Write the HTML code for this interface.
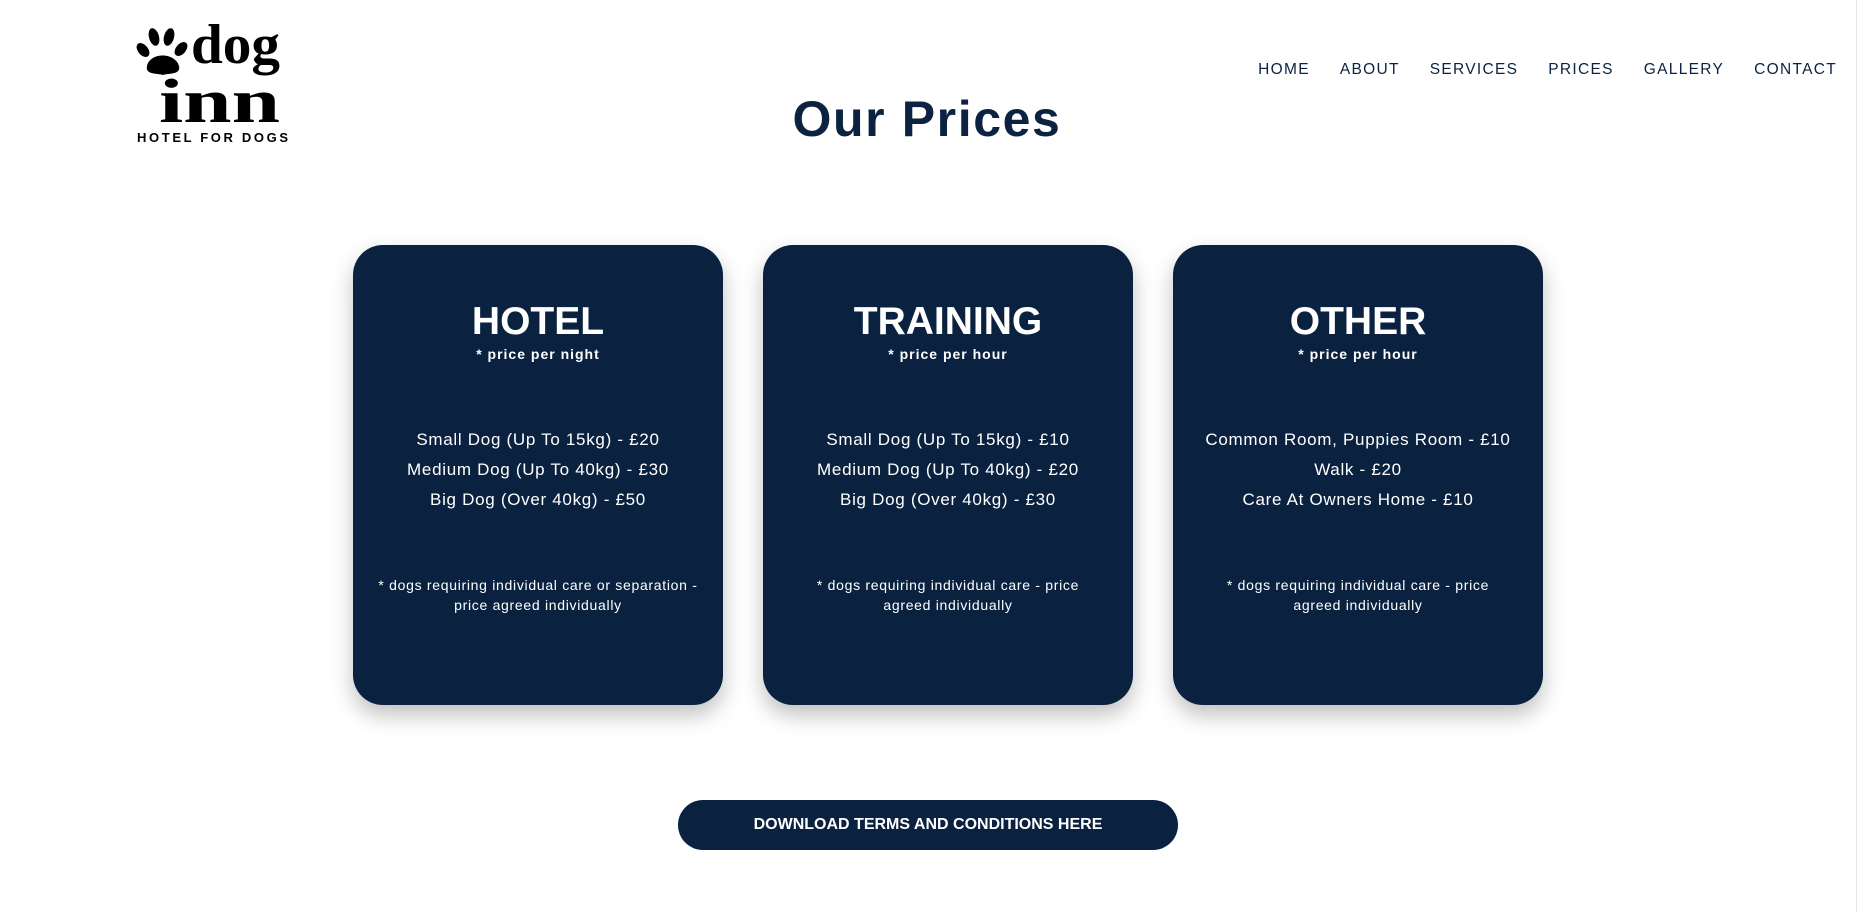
<!DOCTYPE html>
<html><head><meta charset="utf-8"><style>
*{margin:0;padding:0;box-sizing:border-box}
body{width:1874px;height:912px;background:#fff;font-family:"Liberation Sans",sans-serif;color:#0b2240;position:relative;overflow:hidden}
.nav{position:absolute;top:61px;right:37px;display:flex;gap:0}
.nav a{font-size:15.5px;letter-spacing:1.3px;color:#0b2240;text-decoration:none;margin-left:30px}
h1{position:absolute;top:90px;left:0;width:1854px;text-align:center;font-size:50px;font-weight:bold;letter-spacing:1.6px;color:#0b2240}
.card{position:absolute;top:245px;width:370px;height:460px;background:#0a2240;border-radius:30px;box-shadow:0 10px 22px rgba(0,0,0,.25);color:#fff;text-align:center}
.t{margin-top:56px;font-size:39px;font-weight:bold;line-height:42px}
.s{font-size:14px;font-weight:bold;letter-spacing:1px;margin-top:3px}
.p{margin-top:63px;font-size:17px;line-height:30px;letter-spacing:.7px}
.f{position:absolute;top:330px;left:14px;right:14px;font-size:14px;line-height:20px;letter-spacing:.7px}
.btn{position:absolute;left:678px;top:800px;width:500px;height:50px;border-radius:25px;background:#0a2240;color:#fff;font-weight:bold;font-size:16px;text-align:center;line-height:50px}
.sb{position:absolute;left:1856px;top:0;width:18px;height:912px;background:#fff;border-left:1px solid #e4e4e4}
</style></head><body>
<svg style="position:absolute;left:135px;top:18px" width="160" height="130" viewBox="0 0 160 130">
<g fill="#000">
<ellipse cx="8" cy="32" rx="5" ry="8" transform="rotate(-40 8 32)"/>
<ellipse cx="19" cy="19" rx="5" ry="9" transform="rotate(-15 19 19)"/>
<ellipse cx="34" cy="19" rx="5" ry="9" transform="rotate(15 34 19)"/>
<ellipse cx="46" cy="31" rx="5" ry="8" transform="rotate(40 46 31)"/>
<path d="M12 48 C15 34 40 34 44 48 C46 57 34 55 28 57 C22 55 10 57 12 48Z"/>
<text x="56" y="45" font-family="Liberation Serif,serif" font-weight="bold" font-size="56" textLength="89" lengthAdjust="spacingAndGlyphs">dog</text>
<text x="24" y="104" font-family="Liberation Serif,serif" font-weight="bold" font-size="62" textLength="121" lengthAdjust="spacingAndGlyphs">inn</text>
<text x="2" y="124" font-family="Liberation Sans,sans-serif" font-weight="bold" font-size="13" textLength="151" lengthAdjust="spacing">HOTEL FOR DOGS</text>
</g></svg>
<div class="nav"><a>HOME</a><a>ABOUT</a><a>SERVICES</a><a>PRICES</a><a>GALLERY</a><a>CONTACT</a></div>
<h1>Our Prices</h1>
<div class="card" style="left:353px"><div class="t">HOTEL</div><div class="s">* price per night</div><div class="p">Small Dog (Up To 15kg) - £20<br>Medium Dog (Up To 40kg) - £30<br>Big Dog (Over 40kg) - £50</div><div class="f">* dogs requiring individual care or separation - price agreed individually</div></div>
<div class="card" style="left:763px"><div class="t">TRAINING</div><div class="s">* price per hour</div><div class="p">Small Dog (Up To 15kg) - £10<br>Medium Dog (Up To 40kg) - £20<br>Big Dog (Over 40kg) - £30</div><div class="f" style="left:40px;right:40px">* dogs requiring individual care - price agreed individually</div></div>
<div class="card" style="left:1173px"><div class="t">OTHER</div><div class="s">* price per hour</div><div class="p">Common Room, Puppies Room - £10<br>Walk - £20<br>Care At Owners Home - £10</div><div class="f" style="left:40px;right:40px">* dogs requiring individual care - price agreed individually</div></div>
<div class="btn">DOWNLOAD TERMS AND CONDITIONS HERE</div>
<div class="sb"></div>
</body></html>
